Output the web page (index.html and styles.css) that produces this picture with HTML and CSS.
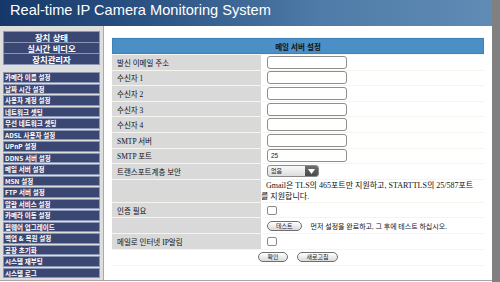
FILE: index.html
```html
<!DOCTYPE html>
<html lang="ko">
<head>
    <meta charset="UTF-8">
    <title>Real-time IP Camera Monitoring System</title>
    <link rel="stylesheet" href="styles.css">
</head>
<body>
<div class="page">
    <div class="header">Real-time IP Camera Monitoring System</div>

    <div class="main">
        <div class="sidebar">
            <div class="menu-top">
                <a class="menu-big">장치 상태</a>
                <a class="menu-big">실시간 비디오</a>
                <a class="menu-big">장치관리자</a>
            </div>
            <ul class="menu-list">
                <li>카메라 이름 설정</li>
                <li>날짜 시간 설정</li>
                <li>사용자 계정 설정</li>
                <li>네트워크 셋팅</li>
                <li>무선 네트워크 셋팅</li>
                <li>ADSL 사용자 설정</li>
                <li>UPnP 설정</li>
                <li>DDNS 서버 설정</li>
                <li>메일 서버 설정</li>
                <li>MSN 설정</li>
                <li>FTP 서버 설정</li>
                <li>알람 서비스 설정</li>
                <li>카메라 이동 설정</li>
                <li>펌웨어 업그레이드</li>
                <li>백업 &amp; 복원 설정</li>
                <li>공장 초기화</li>
                <li>시스템 재부팅</li>
                <li>시스템 로그</li>
            </ul>
        </div>

        <div class="content">
            <table class="settings">
                <tr><th colspan="2">메일 서버 설정</th></tr>
                <tr>
                    <td class="label">발신 이메일 주소</td>
                    <td class="value"><input type="text" class="field"></td>
                </tr>
                <tr>
                    <td class="label">수신자 1</td>
                    <td class="value"><input type="text" class="field"></td>
                </tr>
                <tr>
                    <td class="label">수신자 2</td>
                    <td class="value"><input type="text" class="field"></td>
                </tr>
                <tr>
                    <td class="label">수신자 3</td>
                    <td class="value"><input type="text" class="field"></td>
                </tr>
                <tr>
                    <td class="label">수신자 4</td>
                    <td class="value"><input type="text" class="field"></td>
                </tr>
                <tr>
                    <td class="label">SMTP 서버</td>
                    <td class="value"><input type="text" class="field"></td>
                </tr>
                <tr>
                    <td class="label">SMTP 포트</td>
                    <td class="value"><input type="text" class="field" value="25"></td>
                </tr>
                <tr>
                    <td class="label">트랜스포트계층 보안</td>
                    <td class="value">
                        <span class="select">
                            <span class="select-text">없음</span>
                            <span class="select-arrow">
                                <svg width="7" height="5" viewBox="0 0 7 5"><path d="M0 0h7L3.5 5z" fill="#fff"/></svg>
                            </span>
                        </span>
                    </td>
                </tr>
                <tr>
                    <td class="label"></td>
                    <td class="value note">Gmail은 TLS의 465포트만 지원하고, STARTTLS의 25/587포트를 지원합니다.</td>
                </tr>
                <tr>
                    <td class="label">인증 필요</td>
                    <td class="value"><input type="checkbox" class="check"></td>
                </tr>
                <tr>
                    <td class="label"></td>
                    <td class="value"><button class="btn">테스트</button><span class="hint">먼저 설정을 완료하고, 그 후에 테스트 하십시오.</span></td>
                </tr>
                <tr>
                    <td class="label">메일로 인터넷 IP알림</td>
                    <td class="value"><input type="checkbox" class="check"></td>
                </tr>
                <tr>
                    <td class="actions" colspan="2">
                        <button class="btn btn-ok">확인</button>
                        <button class="btn">새로고침</button>
                    </td>
                </tr>
            </table>
        </div>
    </div>
</div>
</body>
</html>
```

FILE: styles.css
```css
body {
    margin: 0;
    background: #808080;
    font-family: "Liberation Serif", "Noto Sans CJK KR", serif;
}
.page {
    width: 492px;
    height: 282px;
    background: #fff;
    overflow: hidden;
}
.header {
    height: 26px;
    padding-left: 10px;
    background: linear-gradient(to right, #163769 0%, #2f5888 35%, #4f7ba8 65%, #5f8bb5 100%);
    color: #fff;
    font-family: "Liberation Sans", Arial, sans-serif;
    font-size: 14.6px;
    line-height: 21px;
}
.main {
    display: flex;
    height: 254px;
    border-bottom: 1px solid #a6a6a6;
}

/* Sidebar */
.sidebar {
    width: 97px;
    padding: 5px 3px 0;
    background: #dedede;
    border-right: 1px solid #a9a9a9;
}
.menu-top {
    display: flex;
    flex-direction: column;
}
.menu-big {
    display: block;
    height: 10px;
    line-height: 10px;
    margin-bottom: -1px;
    background: #3a4773;
    border: 1px solid #8c96b5;
    color: #fff;
    font-family: "Noto Sans CJK KR", sans-serif;
    font-weight: bold;
    font-size: 8.4px;
    text-align: center;
    overflow: hidden;
}
.menu-list {
    list-style: none;
    margin: 8px 0 0;
    padding: 0;
}
.menu-list li {
    height: 8.5px;
    line-height: 8.5px;
    margin-bottom: 1px;
    padding-left: 1px;
    background: #3a4773;
    border: 1px solid #8c96b5;
    color: #fff;
    font-family: "Noto Sans CJK KR", sans-serif;
    font-weight: bold;
    font-size: 6.5px;
    white-space: nowrap;
}

/* Content */
.content {
    flex: 1;
    padding: 11px 0 0 8px;
}
.settings {
    width: 372px;
    border-collapse: separate;
    border-spacing: 0 1px;
    background: #f5f5ee;
    font-size: 7.5px;
}
.settings th {
    height: 14px;
    padding: 0;
    background: #4a8fc6;
    border: 1px solid #3f82b8;
    font-family: "Noto Sans CJK KR", sans-serif;
    font-size: 7.5px;
    font-weight: bold;
    color: #111;
}
.settings td {
    height: 14.6px;
    padding: 0;
}
.label {
    width: 144px;
    padding-left: 5px !important;
    background: #d9d9d9;
    color: #111;
}
.value {
    padding-left: 6px !important;
    background: #fff;
}
.field {
    box-sizing: border-box;
    display: block;
    width: 80px;
    height: 13px;
    margin: 0;
    padding: 0 3px;
    border: 1px solid #8e8e8e;
    border-radius: 3px;
    font-family: "Liberation Sans", sans-serif;
    font-size: 6.5px;
    color: #222;
}
.select {
    display: flex;
    width: 52px;
    height: 12px;
    box-sizing: border-box;
    border: 1px solid #8a8a8a;
    border-radius: 3px;
    overflow: hidden;
    background: linear-gradient(#fafafa, #dcdcdc);
}
.select-text {
    flex: 1;
    padding-left: 3px;
    font-family: "Noto Sans CJK KR", sans-serif;
    font-size: 6px;
    line-height: 10px;
    color: #222;
}
.select-arrow {
    display: flex;
    align-items: center;
    justify-content: center;
    width: 13px;
    background: linear-gradient(#6e6e6e, #4a4a4a);
}
.note {
    height: 21px !important;
    padding: 0 9px 0 0 !important;
    text-indent: 5px;
    font-size: 8px;
    line-height: 11px;
    color: #111;
}
.check {
    -webkit-appearance: none;
    appearance: none;
    display: block;
    width: 10px;
    height: 9px;
    margin: 0;
    border: 1px solid #8a8a8a;
    border-radius: 2px;
    background: #fff;
}
.btn {
    height: 10px;
    padding: 0 8px;
    margin: 0;
    border: 1px solid #6f6f6f;
    border-radius: 5px;
    background: linear-gradient(#ffffff, #dadada);
    font-family: "Noto Sans CJK KR", sans-serif;
    font-size: 6px;
    line-height: 8px;
    color: #222;
    vertical-align: middle;
}
.hint {
    margin-left: 9px;
    font-size: 7px;
    vertical-align: middle;
    color: #111;
}
.actions {
    height: 15.4px !important;
    background: #fff;
    text-align: center;
}
.btn-ok {
    margin-right: 8px;
}
```
